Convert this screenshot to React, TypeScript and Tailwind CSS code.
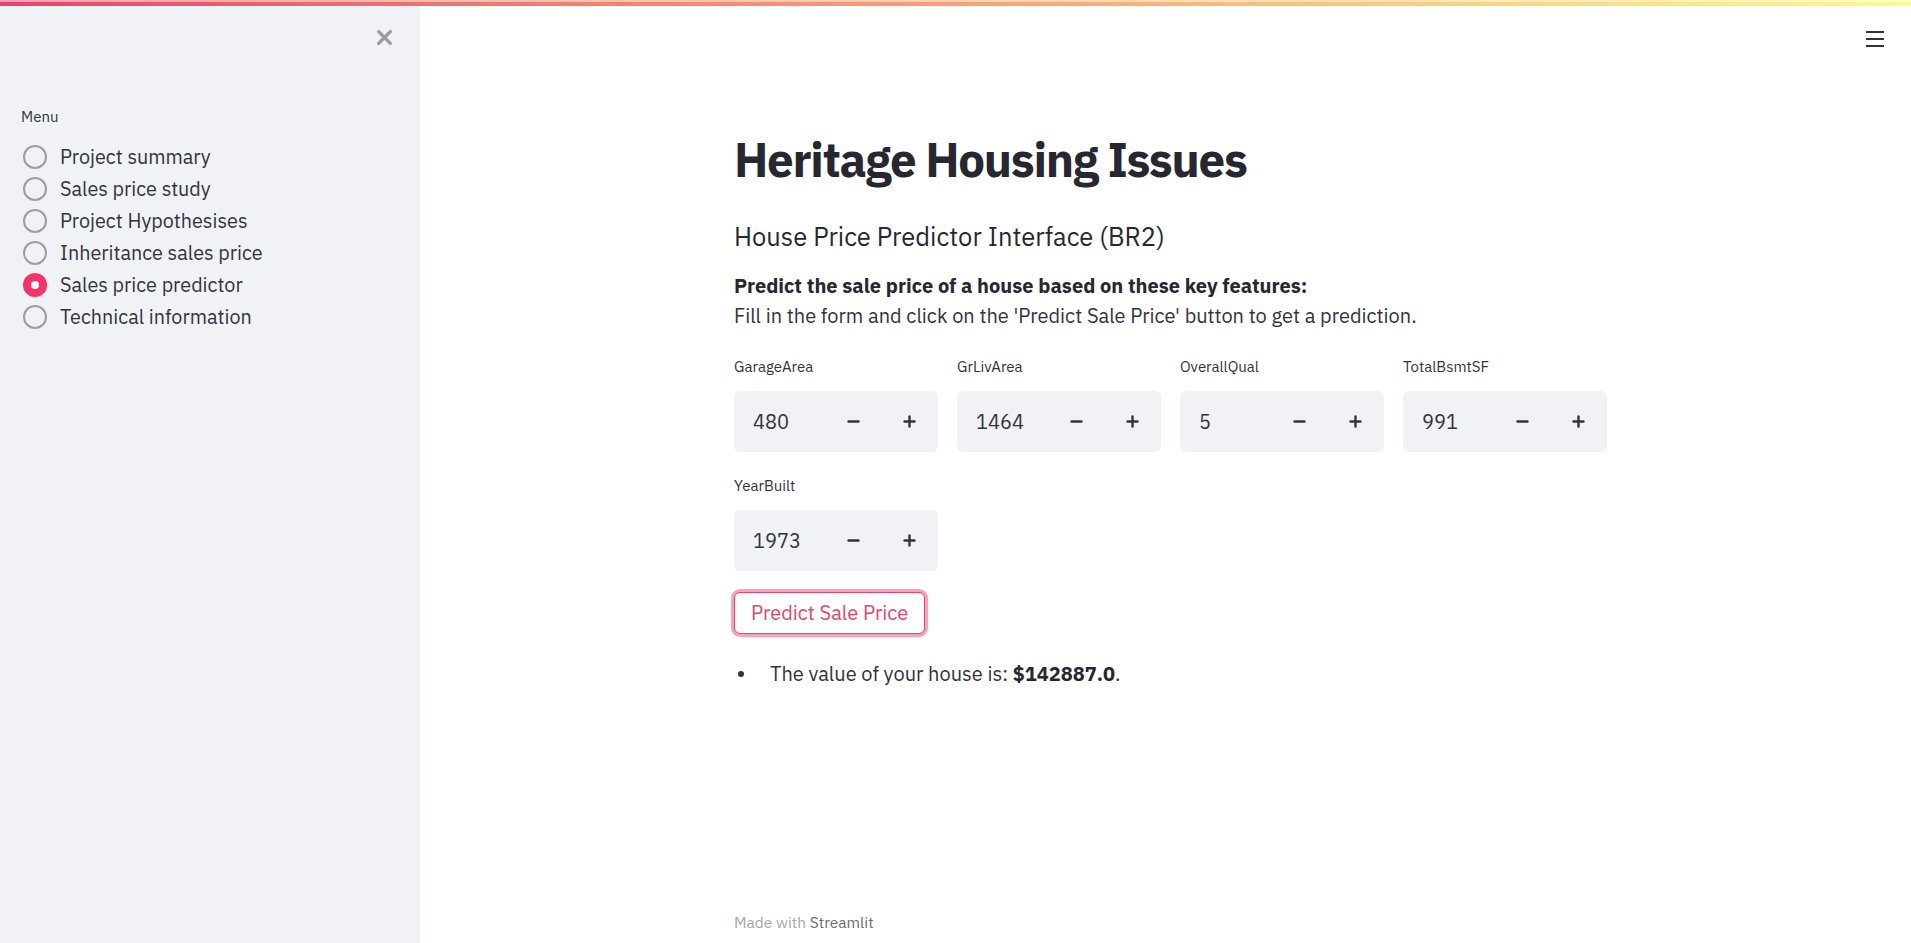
import { Minus, Plus } from "lucide-react";

const menuItems = [
    "Project summary",
    "Sales price study",
    "Project Hypothesises",
    "Inheritance sales price",
    "Sales price predictor",
    "Technical information",
];

const firstRow = [
    { label: "GarageArea", value: "480" },
    { label: "GrLivArea", value: "1464" },
    { label: "OverallQual", value: "5" },
    { label: "TotalBsmtSF", value: "991" },
];

const NumberInput = ({ label, value }: { label: string; value: string }) => (
    <div className="flex w-[204px] flex-col">
        <label className="text-[15px] leading-[20px] text-[#31333f]">{label}</label>
        <div className="mt-[14px] flex h-[61px] items-center rounded-[6px] bg-[#f0f2f6]">
            <span className="flex-1 pl-[19px] text-[20px] text-[#31333f]">{value}</span>
            <button className="flex h-full w-[56px] items-center justify-center text-[#31333f]">
                <Minus size={17} strokeWidth={3.4} />
            </button>
            <button className="mr-[1px] flex h-full w-[56px] items-center justify-center text-[#31333f]">
                <Plus size={17} strokeWidth={3.4} />
            </button>
        </div>
    </div>
);

export default function App() {
    const selected = "Sales price predictor";

    return (
        <div className="relative flex h-[943px] w-full overflow-hidden bg-white font-['IBM_Plex_Sans','Open_Sans',sans-serif] text-[#31333f]">
            {/* decoration bar */}
            <div className="absolute left-0 right-0 top-0 z-20 h-[6px] bg-gradient-to-r from-[#e9416a] via-[#f2a274] to-[#fffa90]">
                <div className="h-[2px] w-full bg-white/50" />
            </div>

            <aside className="flex h-full w-[420px] shrink-0 flex-col bg-[#f0f2f6] px-[21px]">
                <div className="flex justify-end pr-[6px] pt-[29px]">
                    <svg width="17" height="17" viewBox="0 0 16 16" className="text-[#9a9ba3]">
                        <path d="M2.5 2.5 L13.5 13.5 M13.5 2.5 L2.5 13.5" stroke="currentColor" strokeWidth="3.2" strokeLinecap="round" />
                    </svg>
                </div>

                <p className="mt-[61px] text-[15px] leading-[20px] text-[#31333f]">Menu</p>
                <div className="mt-[14px] flex flex-col">
                    {menuItems.map((item) => (
                        <div key={item} className="flex h-[32px] items-center">
                            {item === selected ? (
                                <span className="ml-[2px] flex h-[24px] w-[24px] items-center justify-center rounded-full bg-[#f63366]">
                                    <span className="h-[8px] w-[8px] rounded-full bg-white" />
                                </span>
                            ) : (
                                <span className="ml-[2px] h-[24px] w-[24px] rounded-full border-[2.5px] border-[#9b9da6] bg-[#f0f2f6]" />
                            )}
                            <span className="ml-[13px] text-[19.8px] text-[#31333f]">{item}</span>
                        </div>
                    ))}
                </div>
            </aside>

            <main className="relative flex h-full flex-1 flex-col pl-[10px]">
                <button className="absolute right-[27px] top-[31px] flex flex-col gap-[5px]">
                    <span className="h-[2px] w-[18px] bg-[#31333f]" />
                    <span className="h-[2px] w-[18px] bg-[#31333f]" />
                    <span className="h-[2px] w-[18px] bg-[#31333f]" />
                </button>

                <div className="mx-auto flex w-[873px] flex-1 flex-col pt-[130px]">
                    <h1 className="text-[47.5px] font-bold leading-[58px] tracking-[-1.3px] text-[#262730]">Heritage Housing Issues</h1>
                    <h3 className="mt-[34px] text-[25.5px] leading-[30px] text-[#262730]">House Price Predictor Interface (BR2)</h3>

                    <p className="mt-[19px] text-[20px] font-bold leading-[30px] text-[#262730]">
                        Predict the sale price of a house based on these key features:
                    </p>
                    <p className="text-[20px] leading-[30px] text-[#31333f]">
                        Fill in the form and click on the 'Predict Sale Price' button to get a prediction.
                    </p>

                    <div className="mt-[26px] flex gap-[19px]">
                        {firstRow.map((f) => (
                            <NumberInput key={f.label} label={f.label} value={f.value} />
                        ))}
                    </div>
                    <div className="mt-[24px] flex gap-[19px]">
                        <NumberInput label="YearBuilt" value="1973" />
                    </div>

                    <div className="mt-[21px]">
                        <button className="h-[42px] rounded-[6px] border border-[#e5456d] bg-white px-[16px] text-[20px] text-[#e3486e] shadow-[0_0_0_3px_rgba(242,88,128,0.55)]">
                            Predict Sale Price
                        </button>
                    </div>

                    <div className="mt-[25px] flex items-center">
                        <span className="ml-[4px] h-[6px] w-[6px] rounded-full bg-[#31333f]" />
                        <p className="ml-[26px] text-[20px] leading-[30px] text-[#31333f]">
                            The value of your house is: <strong className="font-bold text-[#262730]">$142887.0</strong>.
                        </p>
                    </div>

                    <footer className="mt-auto pb-[11px] text-[15.5px] leading-[20px] text-[#a6a7ab]">
                        Made with <span className="text-[#6b6c73]">Streamlit</span>
                    </footer>
                </div>
            </main>
        </div>
    );
}
